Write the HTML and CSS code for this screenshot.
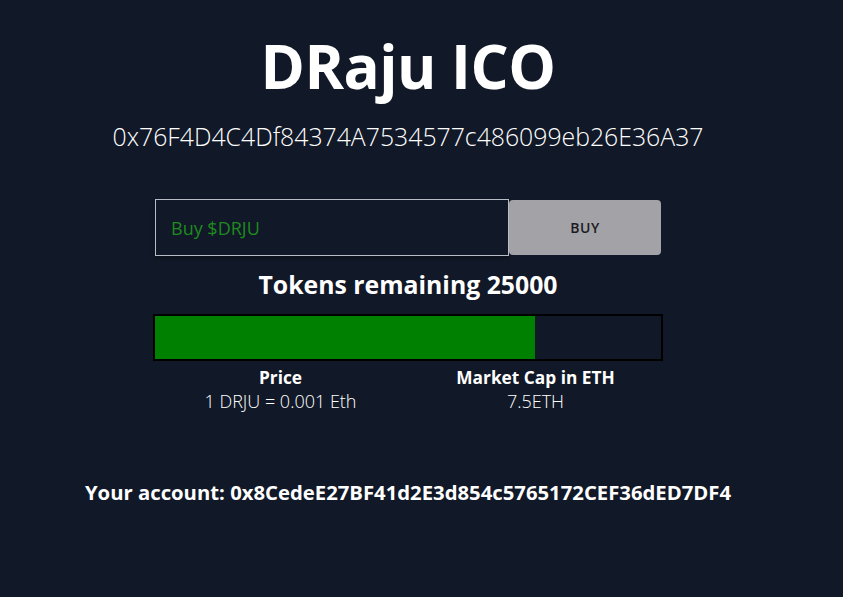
FILE: index.html
```html
<!DOCTYPE html>
<html>
<head>
<meta charset="utf-8">
<link rel="stylesheet" href="styles.css">
</head>
<body>
<main class="app">
  <h1 class="title">DRaju ICO</h1>
  <p class="contract">0x76F4D4C4Df84374A7534577c486099eb26E36A37</p>
  <div class="buy-row">
    <input class="buy-input" type="text" placeholder="Buy $DRJU">
    <button class="buy-btn">BUY</button>
  </div>
  <h2 class="remaining">Tokens remaining 25000</h2>
  <div class="progress"><div class="progress-fill" style="width:75%"></div></div>
  <div class="stats">
    <div class="stat">
      <div class="stat-label">Price</div>
      <div class="stat-value">1 DRJU = 0.001 Eth</div>
    </div>
    <div class="stat">
      <div class="stat-label">Market Cap in ETH</div>
      <div class="stat-value">7.5ETH</div>
    </div>
  </div>
  <p class="account">Your account: 0x8CedeE27BF41d2E3d854c5765172CEF36dED7DF4</p>
</main>
</body>
</html>
```
FILE: styles.css
```css
html, body {
  margin: 0;
  padding: 0;
  background: #111827;
  color: #ffffff;
  font-family: "Open Sans", "Noto Sans", sans-serif;
}
.app {
  width: 816px;
  height: 597px;
  display: flex;
  flex-direction: column;
  align-items: center;
  text-align: center;
}
.title {
  margin: 26px 0 0;
  font-size: 60px;
  font-weight: 700;
  line-height: 80px;
  letter-spacing: -0.5px;
}
.contract {
  margin: 14px 0 0;
  font-size: 24.8px;
  font-weight: 300;
  line-height: 32px;
}
.buy-row {
  margin-top: 47px;
  display: flex;
  align-items: flex-start;
}
.buy-input {
  box-sizing: border-box;
  width: 354px;
  height: 57px;
  margin: 0;
  padding: 0 15px;
  background: transparent;
  border: 1px solid #b8bcc4;
  color: #1f8a1f;
  font-family: "Open Sans", sans-serif;
  font-size: 18px;
  box-shadow: 0 2px 3px rgba(0,0,0,0.35);
  outline: none;
}
.buy-input::placeholder {
  color: #1f8a1f;
}
.buy-btn {
  box-sizing: border-box;
  width: 152px;
  height: 55px;
  margin: 1px 0 0;
  border: none;
  border-radius: 4px;
  background: #a2a2a7;
  color: #1b1b22;
  font-family: "Open Sans", sans-serif;
  font-size: 14px;
  font-weight: 600;
  letter-spacing: 0.5px;
}
.remaining {
  margin: 11px 0 0;
  font-size: 24.8px;
  font-weight: 700;
  line-height: 34px;
}
.progress {
  box-sizing: border-box;
  margin-top: 13px;
  width: 510px;
  height: 47px;
  border: 2px solid #000000;
}
.progress-fill {
  height: 100%;
  background: #008000;
}
.stats {
  width: 510px;
  display: grid;
  grid-template-columns: 1fr 1fr;
  margin-top: 5px;
}
.stat-label {
  font-size: 17.3px;
  font-weight: 700;
  line-height: 24px;
}
.stat-value {
  font-size: 18px;
  font-weight: 300;
  line-height: 22px;
}
.account {
  margin: 68px 0 0;
  font-size: 20.3px;
  font-weight: 700;
  line-height: 24px;
}
```
